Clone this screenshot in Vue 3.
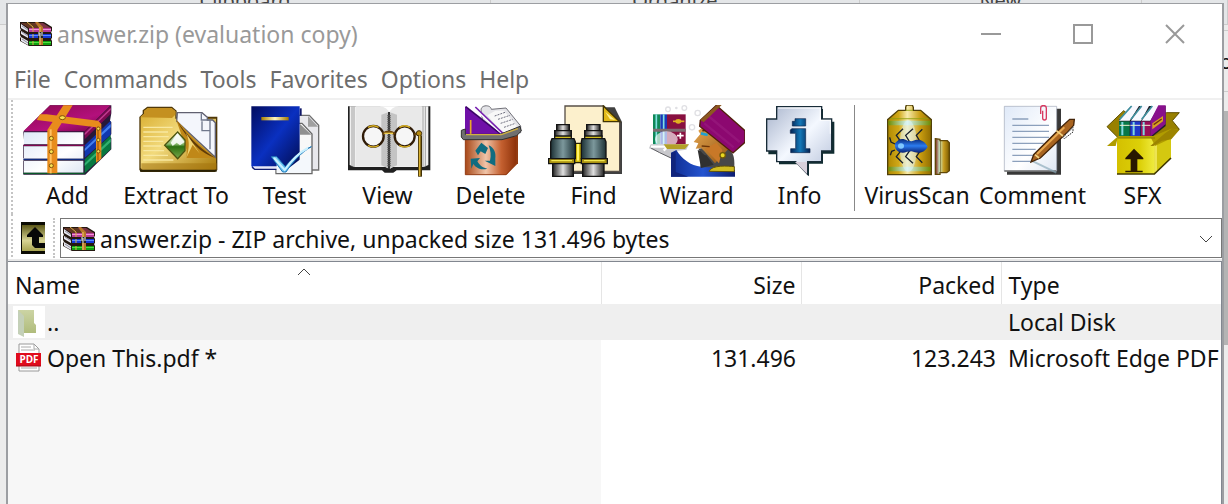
<script setup>
const menus = ['File', 'Commands', 'Tools', 'Favorites', 'Options', 'Help']
const rows = [
  { icon: 'folder', name: '..', size: '', packed: '', type: 'Local Disk' },
  { icon: 'pdf', name: 'Open This.pdf *', size: '131.496', packed: '123.243', type: 'Microsoft Edge PDF' },
]
</script>

<template>
  <div class="desktop">
    <svg class="defs" aria-hidden="true">
      <defs>
        <linearGradient id="gold" x1="0" x2="1" y1="0" y2="0"><stop offset="0" stop-color="#a98000" /><stop offset=".5" stop-color="#fff6c0" /><stop offset="1" stop-color="#a07800" /></linearGradient>
        <linearGradient id="folderGold" x1="0" x2="1" y1="0" y2="1"><stop offset="0" stop-color="#d8ac2c" /><stop offset=".45" stop-color="#f2da7c" /><stop offset="1" stop-color="#a87808" /></linearGradient>
        <linearGradient id="page" x1="0" x2="1" y1="0" y2="1"><stop offset="0" stop-color="#dfe9f8" /><stop offset=".6" stop-color="#fff" /><stop offset="1" stop-color="#dfe7f4" /></linearGradient>
        <linearGradient id="plum" x1="0" x2="1" y1="0" y2="1"><stop offset="0" stop-color="#8c0850" /><stop offset=".6" stop-color="#b3107c" /><stop offset="1" stop-color="#6c0440" /></linearGradient>
        <linearGradient id="navy" x1="0" x2="1" y1="0" y2="1"><stop offset="0" stop-color="#020c60" /><stop offset=".5" stop-color="#0a30c0" /><stop offset="1" stop-color="#020c50" /></linearGradient>
        <linearGradient id="tick" x1="0" x2="1"><stop offset="0" stop-color="#8cdcff" /><stop offset="1" stop-color="#1484d0" /></linearGradient>
        <linearGradient id="bin" x1="0" x2="1"><stop offset="0" stop-color="#a84818" /><stop offset=".4" stop-color="#f0c4a8" /><stop offset=".7" stop-color="#c46030" /><stop offset="1" stop-color="#8c3008" /></linearGradient>
        <linearGradient id="steel" x1="0" x2="1"><stop offset="0" stop-color="#222" /><stop offset=".5" stop-color="#e0e0e0" /><stop offset="1" stop-color="#222" /></linearGradient>
        <linearGradient id="lens" x1="0" x2="1"><stop offset="0" stop-color="#1c3034" /><stop offset=".5" stop-color="#7c989c" /><stop offset="1" stop-color="#1c3034" /></linearGradient>
        <linearGradient id="bubble" x1="0" x2="1" y1="0" y2="1"><stop offset="0" stop-color="#a8b4cc" /><stop offset=".5" stop-color="#f4f8ff" /><stop offset="1" stop-color="#b4c0d8" /></linearGradient>
        <linearGradient id="info" x1="0" x2="1"><stop offset="0" stop-color="#042050" /><stop offset=".5" stop-color="#1478b8" /><stop offset="1" stop-color="#042050" /></linearGradient>
        <linearGradient id="can" x1="0" x2="1"><stop offset="0" stop-color="#b08800" /><stop offset=".25" stop-color="#d0a818" /><stop offset=".45" stop-color="#f8ecac" /><stop offset=".75" stop-color="#c89c10" /><stop offset="1" stop-color="#906c00" /></linearGradient>
        <linearGradient id="canBand" x1="0" x2="1"><stop offset="0" stop-color="#708c00" /><stop offset=".45" stop-color="#d4f4f0" /><stop offset="1" stop-color="#708c00" /></linearGradient>
        <linearGradient id="lid" x1="0" x2="1"><stop offset="0" stop-color="#7c1c10" /><stop offset=".3" stop-color="#c8e8c8" /><stop offset=".6" stop-color="#c89c20" /><stop offset="1" stop-color="#7c5c00" /></linearGradient>
        <linearGradient id="bug" x1="0" x2="0" y1="0" y2="1"><stop offset="0" stop-color="#082878" /><stop offset=".5" stop-color="#2c7cf0" /><stop offset="1" stop-color="#082070" /></linearGradient>
        <linearGradient id="box" x1="0" x2="1"><stop offset="0" stop-color="#d4c000" /><stop offset=".6" stop-color="#dcd008" /><stop offset="1" stop-color="#f0ec40" /></linearGradient>
        <linearGradient id="skin" x1="0" x2="1" y1="0" y2="1"><stop offset="0" stop-color="#e8a850" /><stop offset="1" stop-color="#8c5010" /></linearGradient>
        <linearGradient id="robe" x1="0" x2="1"><stop offset="0" stop-color="#102c90" /><stop offset=".5" stop-color="#2454d0" /><stop offset="1" stop-color="#0c1c70" /></linearGradient>
        <linearGradient id="upBg" x1="0" x2="0" y1="0" y2="1"><stop offset="0" stop-color="#5c5818" /><stop offset=".6" stop-color="#d8d494" /><stop offset="1" stop-color="#a8a450" /></linearGradient>
        <linearGradient id="leaf" x1="0" x2="0" y1="0" y2="1"><stop offset="0" stop-color="#ccd4a4" /><stop offset="1" stop-color="#b0bc7c" /></linearGradient>
        <linearGradient id="emerald" x1="0" x2="0" y1="0" y2="1"><stop offset="0" stop-color="#f0f8e8" /><stop offset=".45" stop-color="#8cbc70" /><stop offset=".55" stop-color="#2c7010" /><stop offset="1" stop-color="#78a84c" /></linearGradient>
        <symbol id="books" viewBox="0 0 32 24">
          <path d="M0 0h24l8 5v4l-1 1 1 2v4l-1 1 1 2v5H9l-9-5v-3l1-1-1-2V9l1-1-1-2z" fill="#241810" />
          <path d="M1 1h22l8 5H9z" fill="#7c3444" /><path d="M2 1h12l7 5H9z" fill="#603820" />
          <path d="M9 6h22v4H9z" fill="#b83c98" /><path d="M9 7h22v1H9z" fill="#f094d8" />
          <path d="M9 12h22v4H9z" fill="#1438d8" /><path d="M9 13h22v1H9z" fill="#5c8cff" />
          <path d="M9 19h22v4H9z" fill="#10a010" /><path d="M9 20h22v1H9z" fill="#50e040" />
          <path d="M1 2l7 5v3L1 6zM1 9l7 4v3l-7-4zM1 15l7 4v4l-7-4z" fill="#e8e8f0" />
          <path d="M2 4l6 4M2 10l6 4M2 17l6 4" stroke="#9090a0" fill="none" />
          <path d="M7 0l6 5v5M13 12v4m0 3v4" stroke="#d8b048" fill="none" />
          <path d="M15 0h3l5 5v18h-4V6z" fill="#b87828" /><path d="M20 5v18" stroke="#f0c870" />
          <path d="M18 10h5v6h-5z" fill="#222" /><path d="M19 10v4m3-4v4m-2-3v5" stroke="#eee" fill="none" />
        </symbol>
      </defs>
    </svg>

    <div class="backdrop" aria-hidden="true">
      <div class="ribbon">
        <span class="group first">Clipboard</span>
        <span class="group second">Organize</span>
        <span class="group third">New</span>
        <span class="group rest"></span>
      </div>
      <div class="side"><span class="cell">or</span><span class="scroll"></span></div>
    </div>

    <main class="window">
      <header class="titlebar">
        <svg class="app-icon" viewBox="0 0 32 24"><use href="#books" /></svg>
        <h1>answer.zip (evaluation copy)</h1>
        <div class="controls">
          <button aria-label="Minimize"><svg viewBox="0 0 20 20"><path d="M0 10h20" /></svg></button>
          <button aria-label="Maximize"><svg viewBox="0 0 20 20"><path d="M1 1h18v18H1z" /></svg></button>
          <button aria-label="Close"><svg viewBox="0 0 20 20"><path d="M1 1l18 18M19 1L1 19" /></svg></button>
        </div>
      </header>

      <nav class="menu">
        <button v-for="m in menus" :key="m">{{ m }}</button>
      </nav>

      <div class="toolbar">
        <button class="tool">
          <svg viewBox="28 21 288 216">
            <path d="M38 101L118 22h184v24l-4 22 4 4v36l-4 8 4 4v34l-78 76H38v-42l3-4-3-4v-38l3-4z" fill="#281838" />
            <path d="M38 100L118 22h182l-78 78z" fill="url(#plum)" />
            <path d="M222 100l78-76v24l-78 76z" fill="#7c0850" /><path d="M222 106l78-76v6l-78 76z" fill="#c03c90" />
            <path d="M222 142l78-74v42l-78 70z" fill="#1038b0" /><path d="M222 152l78-74v10l-78 72z" fill="#4480f0" />
            <path d="M222 184l78-72v42l-78 72z" fill="#087840" /><path d="M222 196l78-74v10l-78 72z" fill="#30b070" />
            <path d="M40 103h178v36H40zM40 145h178v37H40zM40 188h178v36H40z" fill="url(#page)" />
            <path d="M38 142h184" stroke="#800850" stroke-width="4" /><path d="M38 184h184" stroke="#102c80" stroke-width="4" /><path d="M38 226h184" stroke="#085828" stroke-width="4" />
            <path d="M88 49l20 0 154 19 10 10v104l-16 12V88L78 66z" fill="#e88c1c" />
            <path d="M158 22h28l-46 74v130h-30V96z" fill="#e88c1c" /><path d="M120 94v132" stroke="#ffc060" stroke-width="6" /><path d="M262 86v100" stroke="#ac5c08" stroke-width="4" />
            <g fill="#f8e050" stroke="#805008" stroke-width="3"><ellipse cx="155" cy="59" rx="9" ry="6" /><circle cx="122" cy="121" r="6" /><circle cx="122" cy="161" r="6" /><circle cx="122" cy="203" r="6" /><circle cx="263" cy="92" r="5" /><circle cx="263" cy="126" r="5" /><circle cx="263" cy="160" r="5" /></g>
          </svg>
          <span>Add</span>
        </button>
        <button class="tool wide">
          <svg viewBox="354 21 288 216">
            <path d="M388 57l10-10V37l14-11h74l14 12v18h122v160l-8 6H394l-6-6z" fill="#503808" />
            <path d="M392 56l10-8V39l12-9h70l12 10v22h122v150l-4 4H398l-6-6z" fill="url(#folderGold)" />
            <path d="M392 58l10-10V39l12-9h70l12 10v10l-10 10z" fill="#c49020" />
            <path d="M502 44h74l16 14v8h16l8 8v104L500 70z" fill="#f4f6fc" stroke="#606070" stroke-width="4" />
            <path d="M574 46v20h26v32h-24V70M600 82v72" fill="none" stroke="#70788c" stroke-width="4" />
            <path d="M498 64c34 38 70 78 118 116H530v-24z" fill="#c08818" /><path d="M500 66c30 46 70 86 116 114-40-12-84-52-116-114z" fill="#603c08" /><path d="M514 84c20 28 30 46 16 94l18-38 22 28z" fill="#f0d474" />
            <path d="M400 88h88m-88 14h74m-74 14h76m-76 14h60m-60 14h54m-54 14h62m-62 14h74m-74 14h90" stroke="#f8e8a0" stroke-width="4" />
            <path d="M394 196h226v18l-4 4H398l-4-4z" fill="#a47410" opacity=".55" />
            <path d="M503 102l-39 40 39 40 22-24v-32z" fill="url(#emerald)" stroke="#4c5410" stroke-width="4" /><path d="M482 134l20-28 22 26-14 10-10-8-12 10z" fill="#fff" opacity=".85" />
            <path d="M390 218h230" stroke="#282004" stroke-width="6" />
          </svg>
          <span>Extract To</span>
        </button>
        <button class="tool">
          <svg viewBox="19 21 288 216">
            <path d="M202 52h34l28 30v134h-62z" fill="#e8e8ec" stroke="#707070" stroke-width="4" /><path d="M232 54v32h30z" fill="#a0a0a0" />
            <path d="M136 76h78l30 32v119H136z" fill="#f8f8f8" stroke="#686868" stroke-width="4" /><path d="M208 78v32h34z" fill="#909090" />
            <path d="M210 31v22" stroke="#101868" stroke-width="6" />
            <path d="M62 25h145v166l-14 20H70l-8-6z" fill="url(#navy)" /><path d="M66 205h74v8H72z" fill="#e8e8f8" /><path d="M64 208l8 6h66" fill="none" stroke="#101c70" stroke-width="4" />
            <path d="M92 57h82v10H92z" fill="url(#gold)" />
            <path d="M138 198l24 22 44-34 34-20v58H138z" fill="#f4f8fc" />
            <path d="M122 176h16l26 30c22-26 42-44 78-60-34 20-54 44-76 76h-10z" fill="url(#tick)" stroke="#2078b8" stroke-width="3" /><path d="M130 180l32 36c20-28 42-52 70-66" fill="none" stroke="#c8f0ff" stroke-width="6" />
          </svg>
          <span>Test</span>
        </button>
        <button class="tool">
          <svg viewBox="328 21 288 216">
            <path d="M352 25h247v192H498l-10 7h-26l-8-7H352z" fill="#202020" />
            <path d="M357 25h236v176l-14 6h-92l-10 6-12-6h-94l-14-6z" fill="#f0f0f0" />
            <path d="M364 25v180M370 25v182M584 25v180M577 25v182" stroke="#a0a0a0" stroke-width="3" />
            <path d="M376 25h70c14 0 24 8 29 18 5-10 16-18 32-18h66v180H476H376z" fill="#e9e9e9" />
            <path d="M452 50l23-8 24 8v152l-24 10-23-10z" fill="#c4c4c4" /><path d="M440 25c18 0 30 6 36 18 6-12 16-18 34-18z" fill="#fff" />
            <path d="M475 42v172" stroke="#181818" stroke-width="5" /><path d="M475 52v156" stroke="#555" stroke-width="11" stroke-dasharray="3 3" />
            <g fill="#fff" fill-opacity=".6" stroke="#301c08" stroke-width="7"><circle cx="428" cy="115" r="31" /><circle cx="522" cy="115" r="30" /></g>
            <g fill="none" stroke="#d8b020" stroke-width="4"><path d="M412 88a31 31 0 0 1 32 0M412 142a31 31 0 0 0 32 0M506 88a31 31 0 0 1 32 0M506 142a31 31 0 0 0 32 0" /></g>
            <path d="M456 108c12-8 26-8 36 0M551 108h15" fill="none" stroke="#70480c" stroke-width="8" /><path d="M461 106h26" stroke="#f0d050" stroke-width="4" />
            <circle cx="565" cy="106" r="8" fill="#b88c10" stroke="#402c04" stroke-width="3" /><path d="M568 112v124" stroke="#403008" stroke-width="12" /><path d="M567 112v122" stroke="#d8b030" stroke-width="5" />
          </svg>
          <span>View</span>
        </button>
        <button class="tool">
          <svg viewBox="7 21 288 216">
            <path d="M122 40c-6-20 28-22 30-6l44-4 44 54v20H130z" fill="#e4e4e8" stroke="#707078" stroke-width="3" />
            <path d="M140 52l24-14h26l38 46-4 18h-40z" fill="#f8f8f8" /><path d="M162 54l34-12M172 64l36-12M180 76l36-12M190 88l34-12" stroke="#707080" stroke-width="3" stroke-dasharray="6 3" />
            <path d="M73 25l108 84H73z" fill="#7010a8" /><path d="M75 26l106 83" stroke="#3c0468" stroke-width="5" /><path d="M96 25l92 84" stroke="#fff" stroke-width="7" /><path d="M104 27l86 82" stroke="#7820b0" stroke-width="5" />
            <path d="M90 66v42" stroke="#e8a828" stroke-width="5" />
            <path d="M228 106h4v90l-34 34h-12z" fill="#943c10" />
            <path d="M74 116h154v78l-32 36H74z" fill="url(#bin)" stroke="#943c14" stroke-width="3" />
            <path d="M62 97l12-4v16h104l60-24 4 14-14 14-44 12H68l-6-8z" fill="#707070" stroke="#303030" stroke-width="3" /><path d="M76 110h106l50-18" fill="none" stroke="#d0b040" stroke-width="4" />
            <g fill="#106c80"><path d="M104 158l18-24 20 16-8 18-14-8-8 12z" /><path d="M144 142c18 8 22 24 20 40v22l-32-16h16c4-16 2-30-4-46z" /><path d="M90 182l28-2-8 10c8 14 18 20 30 22-18 6-34-2-42-14l-6 14z" /></g>
          </svg>
          <span>Delete</span>
        </button>
        <button class="tool">
          <svg viewBox="316 21 288 216">
            <path d="M378 28h144l22 44v156H378z" fill="#404040" />
            <path d="M373 24h116l48 48v148H373z" fill="#fcf0cc" stroke="#585048" stroke-width="4" />
            <path d="M488 24v47h49z" fill="#e0b818" stroke="#403404" stroke-width="4" /><path d="M494 42l14 22 16 2z" fill="#fff090" />
            <path d="M396 136h34v58h-34z" fill="#d0b808" stroke="#282404" stroke-width="4" /><path d="M412 138v50" stroke="#fff468" stroke-width="6" />
            <g stroke="#141414" stroke-width="4">
              <g fill="url(#steel)"><path d="M348 80h38v18h-38z" /><path d="M342 98h50v18h-50z" /><path d="M336 194h62v41h-62z" /><path d="M438 80h40v18h-40z" /><path d="M432 98h52v18h-52z" /><path d="M426 194h64v41h-64z" /></g>
              <path d="M342 114h50v10h-50zM432 114h52v10h-52z" fill="#d0bc20" />
              <g fill="url(#lens)"><path d="M334 122h66l4 10v50h-74v-50z" /><path d="M424 122h68l4 10v50h-74v-50z" /></g>
              <path d="M324 182h78v15h-78zM422 182h78v15h-78z" fill="#a89010" />
            </g><path d="M332 188h62M430 188h62" stroke="#f4e850" stroke-width="4" />
          </svg>
          <span>Find</span>
        </button>
        <button class="tool">
          <svg viewBox="40 21 288 216">
            <g fill="none" stroke="#e0e0e4" stroke-width="4"><circle cx="97" cy="34" r="7" /><circle cx="146" cy="30" r="7" /><circle cx="169" cy="88" r="8" /><circle cx="186" cy="45" r="8" /><circle cx="122" cy="30" r="2" /></g>
            <path d="M52 49h22v90H52z" fill="#108858" /><path d="M74 49h20v90H74z" fill="#1838b8" /><path d="M94 49h56v90H94z" fill="#881040" /><path d="M62 49v90M84 49v90" stroke="#80e0e0" stroke-width="5" />
            <path d="M52 92h98v9H52z" fill="#7c6c70" /><path d="M112 70h34" stroke="#e0b020" stroke-width="5" /><ellipse cx="128" cy="70" rx="9" ry="7" fill="#e0b020" />
            <ellipse cx="92" cy="124" rx="34" ry="24" fill="#fff" opacity=".65" /><path d="M124 113h20m-10-9v18" stroke="#fff" stroke-width="5" />
            <path d="M46 139h114l-8 16-30 4-16 22-38-18-28-12 4-10z" fill="#c8c8cc" /><path d="M46 150l26 14 34 16" stroke="#606064" stroke-width="3" fill="none" /><path d="M46 146h50l-12 12" stroke="#fff" stroke-width="7" fill="none" /><path d="M84 139h76l-12 14h-54z" fill="#b4a028" />
            <path d="M106 164l16-8c16 26 44 48 74 50h80l22 10v20H106z" fill="url(#robe)" /><path d="M106 166l14-6v62l38 14h-52z" fill="#10247c" />
            <path d="M188 152l10 18-4 38h102c2-36-6-46-18-56l-20-12z" fill="#484848" />
            <path d="M208 82l82 58-26 28-26 28-32-36-10-10-16 2 8-16-14-4 20-24-6-10z" fill="url(#skin)" /><path d="M242 134l18 22-10 40-42-44z" fill="#c87828" />
            <path d="M186 156c14 2 14 16 26 16l22 28-38 10z" fill="#303030" /><path d="M198 144l24 2" stroke="#6c3408" stroke-width="4" />
            <path d="M200 98l26-2" stroke="#50300c" stroke-width="5" /><path d="M196 106l20 5" stroke="#20a0d0" stroke-width="8" />
            <path d="M242 22l86 76v35l-36 32-100-80 2-18z" fill="#8c0870" stroke="#502008" stroke-width="4" /><path d="M206 76l88 72M218 54l94 78" stroke="#a83090" stroke-width="7" opacity=".3" />
            <path d="M194 66l50-45h14l-54 52z" fill="#8c5820" /><path d="M220 220c8-20 58-16 76-14v15z" fill="#d0bc20" stroke="#605008" stroke-width="3" />
            <circle cx="261" cy="172" r="8" fill="#e8d820" stroke="#705808" stroke-width="4" />
          </svg>
          <span>Wizard</span>
        </button>
        <button class="tool">
          <svg viewBox="349 21 288 216">
            <path d="M430 33h132v38h34v96h-34v30h-42v38l-34-36h-56v-30h-32V70h32z" fill="#102c30" />
            <path d="M423 26h135v37h30v96h-30v32h-42v38l-36-38h-57v-32h-30V63h30z" fill="url(#bubble)" stroke="#182c38" stroke-width="4" /><path d="M427 30h127v37h30v40" fill="none" stroke="#fff" stroke-width="4" opacity=".7" />
            <path d="M478 192l36 36v-36z" fill="#d8d0dc" />
            <path d="M478 62h32v22h-40v-14h8zM468 92h42v60h13v12h-58v-12h15v-46h-16v-10z" fill="url(#info)" stroke="#102850" stroke-width="2" />
          </svg>
          <span>Info</span>
        </button>
        <i class="divider"></i>
        <button class="tool wide">
          <svg viewBox="54 21 288 216">
            <path d="M164 28l2-7h18l3 7v9h22l32 28v165H110V65l32-28h22z" fill="url(#can)" stroke="#504008" stroke-width="4" />
            <path d="M112 68h127v14H112zM112 206h127v14H112z" fill="url(#canBand)" /><path d="M164 37h22M118 62h114" stroke="#90a010" stroke-width="4" opacity=".7" />
            <ellipse cx="172" cy="144" rx="26" ry="78" fill="#e0f4f8" opacity=".5" />
            <g fill="none" stroke="#18202c" stroke-width="4"><path d="M150 132l-14-20 20-20m20 40l-12-20 22-20m22 40l-12-20 18-18M150 158l-14 18 20 20m20-38l-12 18 22 20m22-38l-12 18 18 18M132 138l-12-6-4-14m16 38l-10 4-4 12" /></g>
            <path d="M132 136c12-16 24-16 38-8l12 2c22-12 40 0 48 16-10 20-30 22-48 14l-14 1c-16 8-34 0-36-16z" fill="url(#bug)" /><ellipse cx="150" cy="144" rx="9" ry="8" fill="#80c8ff" />
            <path d="M253 122l14 2v4h22l6 6v84l-8 6h-20v5h-14z" fill="url(#lid)" stroke="#604808" stroke-width="4" /><path d="M268 126v98" stroke="#604808" stroke-width="2" />
          </svg>
          <span>VirusScan</span>
        </button>
        <button class="tool wider">
          <svg viewBox="402 21 288 216">
            <path d="M468 32h162v198H468z" fill="#383838" /><path d="M460 25h157v194H460z" fill="url(#page)" stroke="#a0a8b8" stroke-width="2" /><path d="M460 219h156" stroke="#707070" stroke-width="4" />
            <path d="M484 63h48M484 82h110M484 100h110M484 118h110M484 136h94M484 154h70M484 172h62M484 190h56" stroke="#8ca0bc" stroke-width="4" />
            <path d="M569 48V30c0-10 17-10 17 0v30c0 8-11 8-11 0V38" fill="none" stroke="#d83860" stroke-width="4" />
            <path d="M546 190l70 34" stroke="#88a8b8" stroke-width="6" opacity=".65" />
            <path d="M540 192l8-22 84-84 24-22h14l-2 18-22 24-78 74z" fill="#a86420" stroke="#442408" stroke-width="4" /><path d="M558 168l82-80" stroke="#e8a850" stroke-width="6" /><path d="M616 98l20 16M552 170l12 10" stroke="#f0d080" stroke-width="5" /><path d="M636 118l30-30v14l-26 20z" fill="#fff" stroke="#282828" stroke-width="3" stroke-dasharray="5 3" />
          </svg>
          <span>Comment</span>
        </button>
        <button class="tool">
          <svg viewBox="40 21 288 216">
            <path d="M76 86l50-48 30 24 98-18h39l-21 24 21 26-48 24H108z" fill="#988000" stroke="#605000" stroke-width="3" />
            <path d="M112 66l36-42h104v60l-40 32H112z" fill="#202028" />
            <path d="M112 68l36-44h24l-28 44zM148 68l30-44h24l-24 44zM180 68l32-44h20l-26 44z" fill="#f8f8ff" />
            <path d="M114 64l36-40M148 64l32-40M180 64l32-40" stroke="#4090a0" stroke-width="5" />
            <path d="M112 70h32v44h-32z" fill="#087848" /><path d="M146 70h30v44h-30z" fill="#2038c8" /><path d="M178 70h28v44h-28z" fill="#981058" /><path d="M206 68l24-46h22v56l-46 38z" fill="#88108c" />
            <path d="M122 72v40M156 72v40M186 72v40" stroke="#80d8e0" stroke-width="6" /><path d="M114 82h30m2 0h30m4 0h26" stroke="#f0f0d0" stroke-width="3" /><path d="M212 76l32-22v16l-32 24z" fill="#d8a020" /><path d="M216 80l24-17" stroke="#703010" stroke-width="4" />
            <path d="M106 118h114v110H106z" fill="url(#box)" /><path d="M218 118l50-22v84l-50 48z" fill="#d4c810" /><path d="M222 124v98" stroke="#fff880" stroke-width="8" opacity=".6" />
            <path d="M76 144l34-30h106l52-22 22 2-24 28-46 22-12-24H108l-6 24z" fill="#b09c00" /><path d="M108 120h112" stroke="#888000" stroke-width="3" /><path d="M206 144l44-38 20-14 23 4-24 28-28 4-26 16z" fill="#9c8400" />
            <path d="M106 228h112l50-48" fill="none" stroke="#403800" stroke-width="5" />
            <path d="M157 152l28 28v4h-18v34h16v5h-52v-5h16v-34h-16v-4z" fill="#281800" />
          </svg>
          <span>SFX</span>
        </button>
      </div>

      <div class="address">
        <button class="up" aria-label="Up one level">
          <svg viewBox="0 0 24 32"><path d="M0 0h24v32H0z" fill="#0c0c04" /><path d="M1 3h23v26H1z" fill="url(#upBg)" /><path d="M14 5l8 8v2h-4v6h6v5H14l-3-3v-8H6v-2z" fill="#080808" /></svg>
        </button>
        <i class="grip"></i>
        <button class="path" aria-haspopup="listbox">
          <svg class="app-icon" viewBox="0 0 32 24"><use href="#books" /></svg>
          <span>answer.zip - ZIP archive, unpacked size 131.496 bytes</span>
          <svg class="chevron" viewBox="0 0 14 8"><path d="M1 1l6 6 6-6" /></svg>
        </button>
      </div>

      <section class="list">
        <table>
          <colgroup><col class="c-name" /><col class="c-num" /><col class="c-num" /><col /></colgroup>
          <thead>
            <tr>
              <th>Name<svg class="sort" viewBox="0 0 14 8"><path d="M1 7l6-6 6 6" /></svg></th>
              <th class="num">Size</th>
              <th class="num">Packed</th>
              <th>Type</th>
            </tr>
          </thead>
          <tbody>
            <tr v-for="r in rows" :key="r.name" :class="r.icon">
              <td>
                <div class="file">
                  <svg v-if="r.icon === 'folder'" viewBox="0 0 32 32"><path d="M0 0h32v32H0z" fill="#fff" /><path d="M5 4h16v13l2 2v8H10z" fill="url(#leaf)" /><path d="M5 4l6 6v21l-6-3z" fill="#c4d0b8" /></svg>
                  <svg v-else viewBox="0 0 32 32"><path d="M6 2h15l5 5v22H6z" fill="#fff" stroke="#999" /><path d="M21 2v5h5M8 5h10M8 8h14M8 26h16" fill="none" stroke="#aaa" /><path d="M3 11h25v13H3z" fill="#e00b1c" /><path d="M3 24h25" stroke="#a00814" /><text x="16" y="21" text-anchor="middle">PDF</text></svg>
                  <span>{{ r.name }}</span>
                </div>
              </td>
              <td class="num">{{ r.size }}</td>
              <td class="num">{{ r.packed }}</td>
              <td>{{ r.type }}</td>
            </tr>
          </tbody>
        </table>
      </section>
    </main>
  </div>
</template>

<style>
body { background: #ececec; }
</style>

<style scoped>
* { box-sizing: border-box; }
.desktop {
  position: relative;
  display: flex;
  height: 100vh;
  padding: 3px 4px 0 6px;
  overflow: hidden;
  font-family: "Segoe UI", "Noto Sans", "Open Sans", sans-serif;
  font-size: 23px;
  line-height: 32px;
  color: #111;
}
.defs { position: absolute; width: 0; height: 0; }
button { font: inherit; color: inherit; background: none; border: 0; padding: 0; margin: 0; }
.backdrop { position: absolute; inset: 0; background: #ececec; }
.ribbon { display: flex; height: 25px; background: #e4e6e8; border-bottom: 1px solid #ccc; overflow: hidden; color: #444; font-size: 20px; line-height: 2px; }
.group { text-align: center; border-right: 1px solid #ccc; }
.first { width: 40%; }
.second { width: 30%; }
.third { width: 23%; }
.rest { flex: 1; }
.side { display: flex; flex-direction: column; margin-left: auto; width: 8px; }
.cell { height: 62px; margin: 5px 0 19px; border: solid #ccc; border-width: 1px 0; font-size: 20px; line-height: 62px; }
.scroll { height: 234px; background: #b4b4b4; }
.window {
  position: relative;
  flex: 1;
  min-width: 0;
  display: flex;
  flex-direction: column;
  background: #fff;
  border: solid #9c9ea2;
  border-width: 1px 2px 0;
}
.titlebar { display: flex; align-items: center; height: 59px; padding-left: 12px; color: #999; }
.app-icon { width: 32px; height: 24px; flex: none; }
h1 { margin: 0 0 0 5px; font-size: 23px; font-weight: 400; }
.controls { display: flex; margin: 0 1px 0 auto; }
.controls button { display: flex; justify-content: center; width: 92px; }
.controls svg { width: 20px; height: 20px; fill: none; stroke: #999; stroke-width: 2; }
.menu { display: flex; gap: 13px; height: 37px; padding-left: 6px; color: #6d6d6d; border-bottom: 2px solid #f0f0f0; }
.menu button { height: 32px; }
.toolbar { display: flex; height: 114px; margin-left: 3px; padding: 5px 0 0 3px; border-left: 2px dotted #c4c4c4; }
.tool { display: flex; flex-direction: column; align-items: center; flex: none; width: 103px; }
.wide { width: 114px; }
.wider { width: 117px; }
.tool svg { width: 96px; height: 72px; }
.tool span { margin-top: 2px; white-space: nowrap; }
.divider { width: 1px; margin: 0 5px 3px 3px; background: #888; }
.address { display: flex; height: 47px; margin-left: 3px; padding: 4px 0 3px 8px; border-left: 2px dotted #c4c4c4; }
.up { display: flex; align-items: center; }
.up svg { width: 24px; height: 32px; }
.grip { width: 7px; margin: 0 0 0 8px; border-left: 2px dotted #c4c4c4; }
.path { display: flex; flex: 1; align-items: center; padding: 2px 8px 0 2px; border: 1px solid #777; text-align: left; }
.path span { flex: 1; margin-left: 5px; }
.chevron, .sort { width: 14px; height: 8px; fill: none; stroke: #444; }
.list {
  flex: 1;
  min-height: 0;
  overflow: hidden;
  border: solid #828790;
  border-width: 1px 1px 0 0;
  box-shadow: 0 -2px #e8e8e8;
  background: linear-gradient(90deg, #f7f7f7 593px, #fff 593px);
}
table { width: 100%; table-layout: fixed; border-collapse: collapse; }
.c-name { width: 593px; }
.c-num { width: 200px; }
th { position: relative; height: 42px; padding: 4px 6px 0 7px; font-weight: 400; text-align: left; background: #fff; border-right: 1px solid #e5e5e5; }
th:last-child { border-right: 0; }
th.num, td.num { text-align: right; padding-right: 5px; }
.sort { position: absolute; top: 6px; left: 50%; margin-left: -7px; }
td { height: 36px; padding: 2px 0 2px 7px; white-space: nowrap; }
td:first-child { padding-left: 5px; }
.folder { background: #efefef; }
.file { display: flex; align-items: center; }
.file svg { width: 32px; height: 32px; flex: none; }
.file span { margin-left: 2px; }
.file text { font: 700 10px "Open Sans", sans-serif; fill: #fff; }
</style>
